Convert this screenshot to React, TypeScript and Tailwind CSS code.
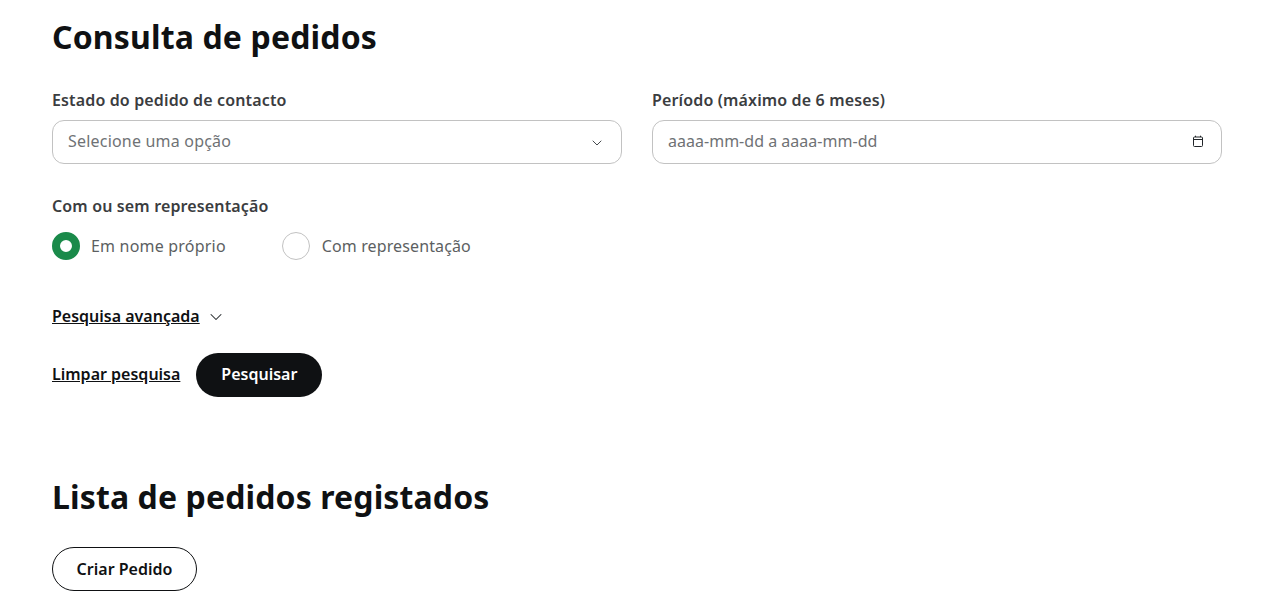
import { ChevronDown } from "lucide-react";

const CalendarIcon = () => (
  <svg width="12" height="12" viewBox="0 0 12 12" fill="none" stroke="#212529" strokeWidth="1" className="-mt-[2px]">
    <rect x="1.5" y="2" width="9" height="9.5" rx="1" />
    <path d="M1.5 4.5h9M3.5 .7v1.3M8.5 .7v1.3" />
  </svg>
);

export default function App() {
  return (
    <div className="bg-white h-[608px] overflow-hidden pl-[52px] pr-[50px] font-['Noto_Sans',sans-serif] text-[#0f1113]">
      <h1 className="text-[32px] leading-[40px] font-bold pt-[17px] tracking-[0.15px]">Consulta de pedidos</h1>

      <div className="grid grid-cols-2 gap-[30px] mt-[31px]">
        <div>
          <label className="block text-[16px] leading-[24px] font-semibold text-[#3b3d3f] tracking-[0.14px]">Estado do pedido de contacto</label>
          <div className="mt-[8px] h-[44px] flex items-center justify-between border border-[#c2c2c2] rounded-[12px] pl-[15px] pr-[16px]">
            <span className="text-[16px] text-[#6f7275] tracking-[0.2px] -mt-[2px]">Selecione uma opção</span>
            <ChevronDown size={16} strokeWidth={1.25} className="text-[#212529] mt-[1px]" />
          </div>
        </div>
        <div>
          <label className="block text-[16px] leading-[24px] font-semibold text-[#3b3d3f] tracking-[0.14px]">Período (máximo de 6 meses)</label>
          <div className="mt-[8px] h-[44px] flex items-center justify-between border border-[#c2c2c2] rounded-[12px] pl-[15px] pr-[17px]">
            <span className="text-[16px] text-[#6f7275] -mt-[2px] tracking-[0.02px]">aaaa-mm-dd a aaaa-mm-dd</span>
            <CalendarIcon />
          </div>
        </div>
      </div>

      <p className="mt-[30px] text-[16px] leading-[24px] font-semibold text-[#3b3d3f] tracking-[0.14px]">Com ou sem representação</p>
      <div className="mt-[14px] flex items-center gap-[56px]">
        <div className="flex items-center gap-[11px]">
          <span className="w-[28px] h-[28px] rounded-full border-[8px] border-[#1a8a4a] bg-white" />
          <span className="text-[16px] text-[#5c5f62] tracking-[0.2px]">Em nome próprio</span>
        </div>
        <div className="flex items-center gap-[12px]">
          <span className="w-[28px] h-[28px] rounded-full border border-[#c2c2c2] bg-white" />
          <span className="text-[16px] text-[#5c5f62] tracking-[0.12px]">Com representação</span>
        </div>
      </div>

      <div className="mt-[44px] flex items-center gap-[6px]">
        <a className="text-[16px] leading-[24px] font-semibold underline">Pesquisa avançada</a>
        <ChevronDown size={20} strokeWidth={1.25} className="text-[#212529] mt-[1px]" />
      </div>

      <div className="mt-[25px] flex items-center gap-[16px]">
        <a className="text-[16px] font-semibold underline -mt-[2px]">Limpar pesquisa</a>
        <button className="h-[44px] w-[126px] rounded-full bg-[#0f1113] text-white text-[16px] font-semibold pb-[2px]">Pesquisar</button>
      </div>

      <h2 className="text-[32px] leading-[40px] font-bold mt-[80px] tracking-[0.12px]">Lista de pedidos registados</h2>

      <button className="mt-[30px] h-[44px] w-[145px] rounded-full border border-[#0f1113] text-[16px] font-semibold pb-[1px]">Criar Pedido</button>
    </div>
  );
}
